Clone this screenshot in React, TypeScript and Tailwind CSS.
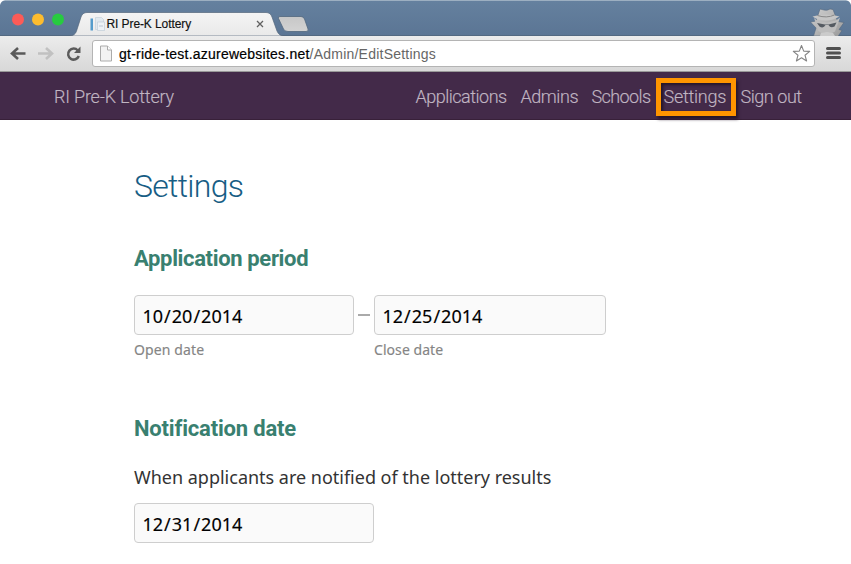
import React from "react";

const links = [
  { label: "Applications", cls: "w-[91px] mr-[14px] tracking-[-0.5px]" },
  { label: "Admins", cls: "w-[57px] mr-[14px] tracking-[-0.45px]" },
  { label: "Schools", cls: "w-[58px] mr-[14px] tracking-[-0.6px]" },
  { label: "Settings", cls: "w-[63px] mr-[14px] tracking-[-0.25px]" },
  { label: "Sign out", cls: "w-[62px] tracking-[-0.45px]" },
];

function TabStrip() {
  return (
    <div className="relative h-[36px] bg-gradient-to-b from-[#65819f] to-[#5b7594]">
      <svg className="absolute inset-0" width="851" height="36" viewBox="0 0 851 36">
        <defs>
          <linearGradient id="tab" x1="0" y1="0" x2="0" y2="1">
            <stop offset="0" stopColor="#f4f4f4" />
            <stop offset="1" stopColor="#e9e9e9" />
          </linearGradient>
          <linearGradient id="newtab" x1="0" y1="0" x2="0" y2="1">
            <stop offset="0" stopColor="#c7c7c7" />
            <stop offset="1" stopColor="#d3d3d3" />
          </linearGradient>
          <linearGradient id="spy" x1="0" y1="0" x2="1" y2="1">
            <stop offset="0" stopColor="#d0d0d0" />
            <stop offset="1" stopColor="#999" />
          </linearGradient>
        </defs>
        <path d="M0 .5H851" stroke="#9cafc1" />
        <path d="M0 0H5Q1 1 0 5ZM851 0H846Q850 1 851 5Z" fill="#fff" />
        <path d="M0 35.5H851" stroke="#536981" />
        <circle cx="18" cy="19.5" r="6" fill="#fc5b57" />
        <circle cx="38" cy="19.5" r="6" fill="#fdbc2e" />
        <circle cx="58" cy="19.5" r="6" fill="#27cb40" />
        <path d="M69 36Q75 36 76.500 31L81 17Q82.500 12.500 87 12.500H266Q270.500 12.500 272 17L277 31Q279 36 284 36Z" fill="url(#tab)" stroke="#53667b" strokeWidth=".7" />
        <path d="M280 16.500H301Q303.500 16.500 304.500 19L308 29Q309 31.500 306 31.500H288Q284.500 31.500 283.500 29L278.500 18.500Q277.500 16.500 280 16.500Z" fill="url(#newtab)" stroke="#52677e" strokeWidth=".8" />
        <path d="M90.500 18.500h2.500v12h-2.500z" fill="#549ccc" />
        <path d="M95.500 17.500h6l2 2v10h-8z" fill="#e1e9ef" stroke="#c0ccd7" strokeWidth=".6" />
        <path d="M97.500 22h7v8.500h-7z" fill="#edf2f6" stroke="#bac8d5" strokeWidth=".6" />
        <path d="M99 26h4" stroke="#bac8d5" />
        <path d="m257 21 6 6m0-6-6 6" stroke="#606060" strokeWidth="1.300" />
        <path d="M813.500 36 816 28l-5.500-6 5.500-1 1-3 3-9 4 1q3 1 6-1l3 .5 3.500 9 1.500 3 6 1-5 7 3 1-4 6Z" fill="url(#spy)" stroke="#52677e" strokeWidth=".6" />
        <path d="M812.500 16.500q14-4 27 0-7 4-13 4-9 0-14-4Z" fill="#c6c6c6" />
        <path d="M817.500 15.500q9 3 17-.5" stroke="#888" fill="none" />
        <path d="m814 18 4 3 9 1.500 9-2 4-3-2 6-3 8-4 2h-9l-4-3Z" fill="#bdbdbd" />
        <path d="m817 23 8 1.500h3.500l8-2-2 4q-4 2-6-1.500h-3q-2 4-6 1.500Z" fill="#555b62" />
        <path d="m821 33 6-1 6 1 2 3h-15Z" fill="#cbcbcb" />
      </svg>
      <div className="relative pl-[106.500px] pt-[16px] text-[12px] leading-[17px] text-[#111] [-webkit-text-stroke:0.15px] tracking-[-0.09px]">RI Pre-K Lottery</div>
    </div>
  );
}

function Toolbar() {
  return (
    <div className="flex h-[36px] items-start border-b border-[#999] bg-gradient-to-b from-[#ececec] to-[#d8d8d8]">
      <svg width="92" height="35" viewBox="0 36 92 35" fill="none">
        <path d="M25.500 53.500H12m6-5.500-6 5.500 6 5.500" stroke="#595959" strokeWidth="2.600" />
        <path d="M38 53.500h14m-6-5.500 6 5.500-6 5.500" stroke="#c1c1c1" strokeWidth="2.600" />
        <path d="M77.800 50.500a5.500 5.500 0 1 0 1 5.500" stroke="#5c5c5c" strokeWidth="2.500" />
        <path d="M80.500 46.500v6.500h-6.500Z" fill="#5c5c5c" />
      </svg>
      <div className="mt-[4px] flex h-[27px] w-[723px] items-center rounded-[3px] border border-[#b4b4b4] bg-white pl-[7px]">
        <svg width="12" height="17" viewBox="0 0 12 17">
          <path d="M.500 1H7.500L11.500 5V16H.500Z" fill="#f3f3f3" stroke="#ababab" />
          <path d="M7.500 1V5h4" fill="#fff" stroke="#ababab" />
        </svg>
        <div className="ml-[7px] pt-[1px] text-[14px] leading-[22px] tracking-[0.23px] text-[#666]"><span className="text-black [-webkit-text-stroke:0.2px]">gt-ride-test.azurewebsites.net</span>/Admin/EditSettings</div>
        <svg className="ml-auto mr-[3px]" width="19" height="19" viewBox="0 0 19 19">
          <path d="m9.500 1.500 2.200 5.600 6 .3-4.700 3.800 1.600 5.800-5.100-3.300L4.400 17 6 11.200 1.300 7.400l6-.3Z" fill="white" stroke="#858585" strokeWidth="1.100" strokeLinejoin="round" />
        </svg>
      </div>
      <svg className="ml-[11px] mt-[10px]" width="15" height="14"><path d="M1.500 2.500h12M1.500 7h12M1.500 11.500h12" stroke="#505050" strokeWidth="3" strokeLinecap="round" /></svg>
    </div>
  );
}

function DateInput({ value, width }: { value: string; width: string }) {
  const [month, day, year] = value.split("/");
  return (
    <div className={"flex h-[40px] items-center rounded-[4px] border border-[#cecece] bg-[#fafafa] pl-[7.500px] pt-[2px] text-[18px] text-black [-webkit-text-stroke:0.15px] " + width}>
      <span>{month}<span className="mx-[1px]">/</span>{day}<span className="mx-[1px]">/</span>{year}</span>
    </div>
  );
}

export default function App() {
  return (
    <div className="h-[564px] w-[851px] overflow-hidden bg-white font-['Liberation_Sans',sans-serif]">
      <TabStrip />
      <Toolbar />
      <nav className="flex h-[48px] items-center border-b border-[#382039] bg-[#432a49] pl-[54px] pt-[1px] font-['Roboto',sans-serif] text-[18px] font-light text-[#c0b5c2] [-webkit-text-stroke:0.15px]">
        <div className="w-[361.500px] whitespace-nowrap tracking-[-0.2px]">RI Pre-K Lottery</div>
        {links.map((link) => (
          <div key={link.label} className={"relative shrink-0 whitespace-nowrap " + link.cls}>
            {link.label === "Settings" && <span className="absolute -left-[8px] -top-[5px] h-[38px] w-[80px] border-[5px] border-[#ff9500] shadow-[2px_3px_3px_#251529,inset_2px_2px_3px_#251529]" />}
            {link.label}
          </div>
        ))}
      </nav>
      <main className="pl-[134px] font-['Noto_Sans',sans-serif]">
        <h1 className="pt-[44px] font-['Roboto',sans-serif] text-[32px] font-light leading-[44px] tracking-[-0.7px] text-[#175d84]">Settings</h1>
        <h2 className="mt-[36px] font-['Roboto',sans-serif] text-[22px] font-bold leading-[30px] tracking-[-0.35px] text-[#398070]">Application period</h2>
        <div className="mt-[21px] flex">
          <div>
            <DateInput value="10/20/2014" width="w-[220px]" />
            <div className="mt-[5px] text-[14px] leading-[20px] tracking-[0.12px] text-[#858585] [-webkit-text-stroke:0.15px]">Open date</div>
          </div>
          <div className="mx-[4px] mt-[19px] h-[2px] w-[12px] bg-[#aaa]" />
          <div>
            <DateInput value="12/25/2014" width="w-[232px]" />
            <div className="mt-[5px] text-[14px] leading-[20px] tracking-[0.06px] text-[#858585] [-webkit-text-stroke:0.15px]">Close date</div>
          </div>
        </div>
        <h2 className="mt-[54px] font-['Roboto',sans-serif] text-[22px] font-bold leading-[30px] tracking-[-0.18px] text-[#398070]">Notification date</h2>
        <p className="mt-[19px] text-[18px] leading-[28px] tracking-[-0.01px] text-[#333]">When applicants are notified of the lottery results</p>
        <div className="mt-[12px]"><DateInput value="12/31/2014" width="w-[240px]" /></div>
      </main>
    </div>
  );
}
